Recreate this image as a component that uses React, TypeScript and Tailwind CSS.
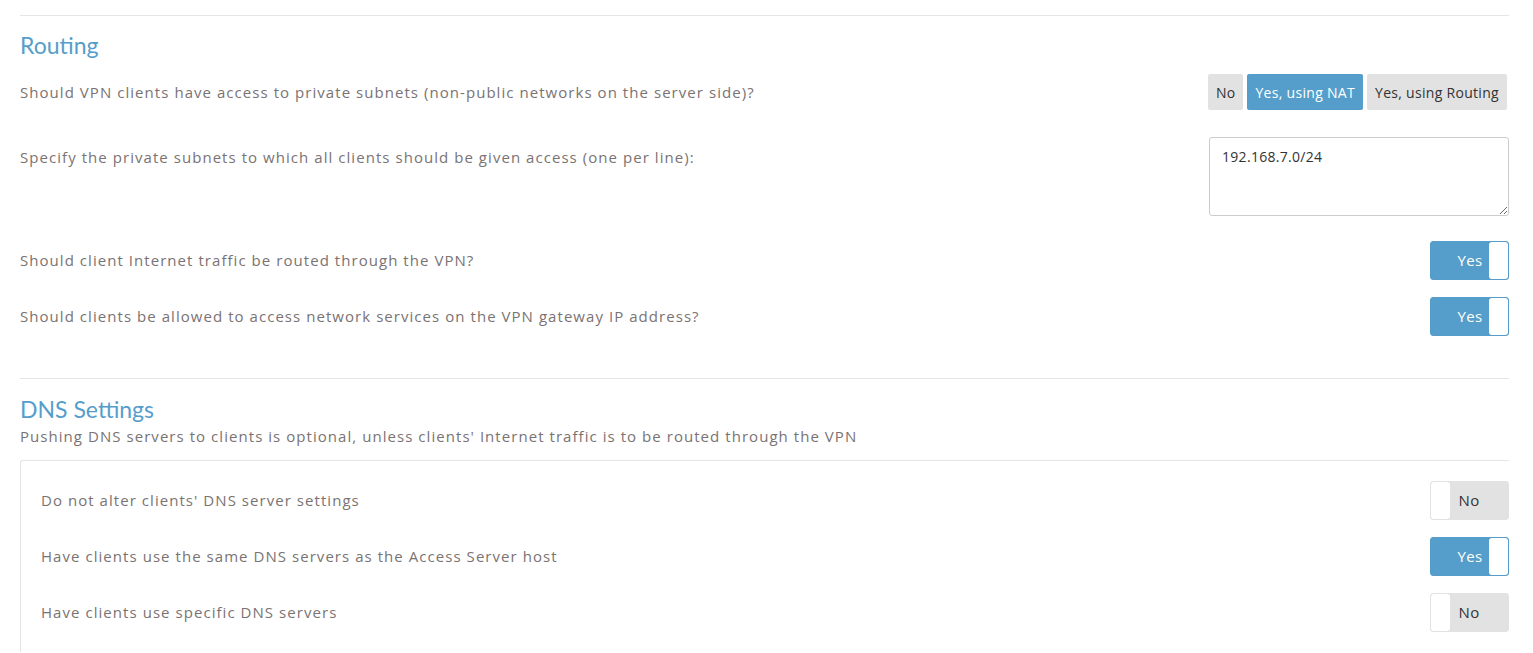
import React from "react";

const Toggle = ({ on }: { on: boolean }) =>
  on ? (
    <div className="flex h-[39px] w-[79px] items-center rounded-[3px] border border-[#559ecb] bg-[#559ecb] tracking-[0.4px]">
      <span className="flex-1 pl-5 text-center text-[15px] text-white">Yes</span>
      <span className="h-full w-[19px] rounded-[3px] bg-white" />
    </div>
  ) : (
    <div className="flex h-[39px] w-[79px] items-center rounded-[3px] border border-[#e2e2e2] bg-[#e2e2e2] tracking-[0.4px]">
      <span className="h-full w-[19px] rounded-[3px] bg-white" />
      <span className="flex-1 pr-5 text-center text-[15px] text-[#333]">No</span>
    </div>
  );

const Row = ({ label, children, className = "" }: { label: string; children: React.ReactNode; className?: string }) => (
  <div className={"flex items-center justify-between " + className}>
    <span>{label}</span>
    {children}
  </div>
);

const App = () => {
  return (
    <div className="min-h-[653px] bg-white pl-5 pr-6 pt-[15px] font-['Open_Sans',sans-serif] text-[15px] tracking-[1.05px] text-[#7a7373]">
      <div className="border-t border-[#e5e5e5] pt-[15px]">
        <h2 className="font-['Lato',sans-serif] text-[23px] leading-7 tracking-normal text-[#559ecb]">Routing</h2>

        <Row label="Should VPN clients have access to private subnets (non-public networks on the server side)?" className="mt-[15px]">
          <div className="flex gap-1 pr-[2px] text-[14px] tracking-[0.3px]">
            <button className="h-[36px] rounded-[2px] bg-[#e2e2e2] px-2 text-[#333]">No</button>
            <button className="h-[36px] rounded-[2px] bg-[#559ecb] px-2 text-white">Yes, using NAT</button>
            <button className="h-[36px] rounded-[2px] bg-[#e2e2e2] px-2 text-[#333]">Yes, using Routing</button>
          </div>
        </Row>

        <div className="mt-[27px] flex items-start justify-between">
          <span className="mt-[9px]">Specify the private subnets to which all clients should be given access (one per line):</span>
          <textarea
            defaultValue="192.168.7.0/24"
            className="h-[79px] w-[300px] resize-y rounded-[3px] border border-[#ccc] px-3 py-2 text-[14px] tracking-[0.3px] text-[#333]"
          />
        </div>

        <Row label="Should client Internet traffic be routed through the VPN?" className="mt-[25px]">
          <Toggle on />
        </Row>
        <Row label="Should clients be allowed to access network services on the VPN gateway IP address?" className="mt-[17px]">
          <Toggle on />
        </Row>
      </div>

      <div className="mt-[42px] border-t border-[#e5e5e5] pt-[16px]">
        <h2 className="font-['Lato',sans-serif] text-[23px] leading-7 tracking-normal text-[#559ecb]">DNS Settings</h2>
        <p className="mt-[2px]">Pushing DNS servers to clients is optional, unless clients' Internet traffic is to be routed through the VPN</p>
        <div className="mt-[12px] rounded-tl-[3px] border-l border-t border-[#e5e5e5] pb-5 pl-5 pt-5">
          <Row label="Do not alter clients' DNS server settings">
            <Toggle on={false} />
          </Row>
          <Row label="Have clients use the same DNS servers as the Access Server host" className="mt-[17px]">
            <Toggle on />
          </Row>
          <Row label="Have clients use specific DNS servers" className="mt-[17px]">
            <Toggle on={false} />
          </Row>
        </div>
      </div>
    </div>
  );
};

export default App;
